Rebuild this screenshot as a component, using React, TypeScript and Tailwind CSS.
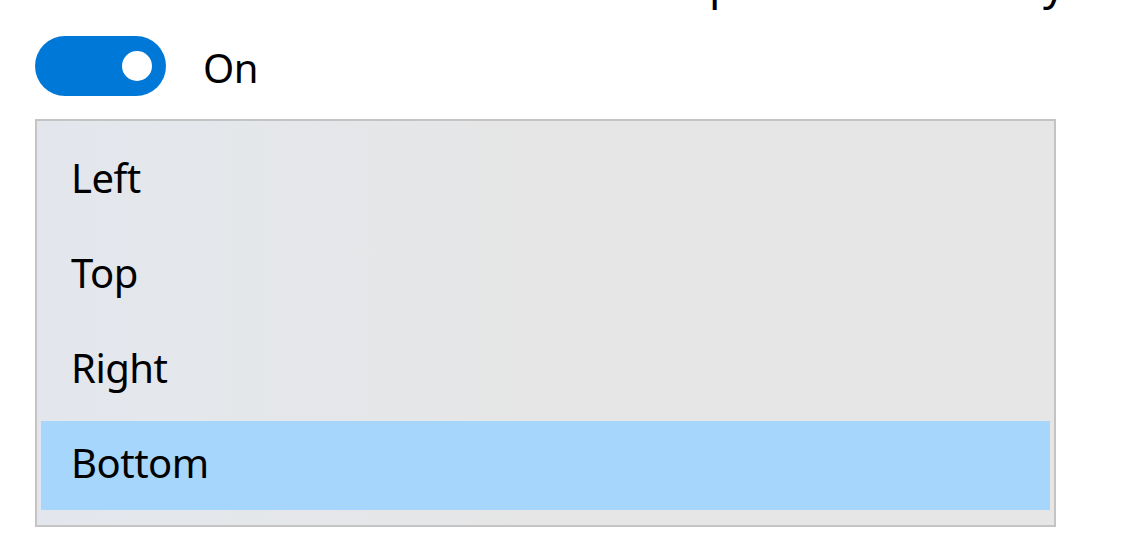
import React from "react";

const items = ["Left", "Top", "Right", "Bottom"];

export default function App() {
  const font = { fontFamily: '"Noto Sans", "Open Sans", sans-serif' };
  return (
    <div className="w-[1122px] h-[549px] bg-white overflow-hidden text-black" style={font}>
      <div className="h-[11px] overflow-hidden">
        <div className="flex mt-[-45px] text-[44px] leading-[54px] tracking-[-1px]">
          <span className="ml-[709px]">p</span>
          <span className="ml-[308px]">y</span>
        </div>
      </div>
      <div className="flex items-center ml-[35px] mt-[25px] h-[60px]">
        <div className="w-[131px] h-[60px] rounded-full bg-[#0078d7] flex items-center justify-end pr-[14px]">
          <div className="w-[30px] h-[30px] rounded-full bg-white" />
        </div>
        <span className="ml-[37px] text-[40px] leading-none tracking-[-0.5px] mt-[4px]">On</span>
      </div>
      <div className="ml-[35px] mt-[23px] w-[1021px] h-[408px] border-2 border-[#c4c4c4] bg-gradient-to-r from-[#e3e7ed] via-[#e6e6e6] to-[#e6e6e6] px-[4px] py-[15px] flex flex-col gap-[6px]">
        {items.map((it) => (
          <div
            key={it}
            className={
              "h-[89px] flex items-center pl-[30px] pb-[6px] text-[40px] tracking-[-0.5px] " +
              (it === "Bottom" ? "bg-[#a6d6fc]" : "")
            }
          >
            {it}
          </div>
        ))}
      </div>
    </div>
  );
}
